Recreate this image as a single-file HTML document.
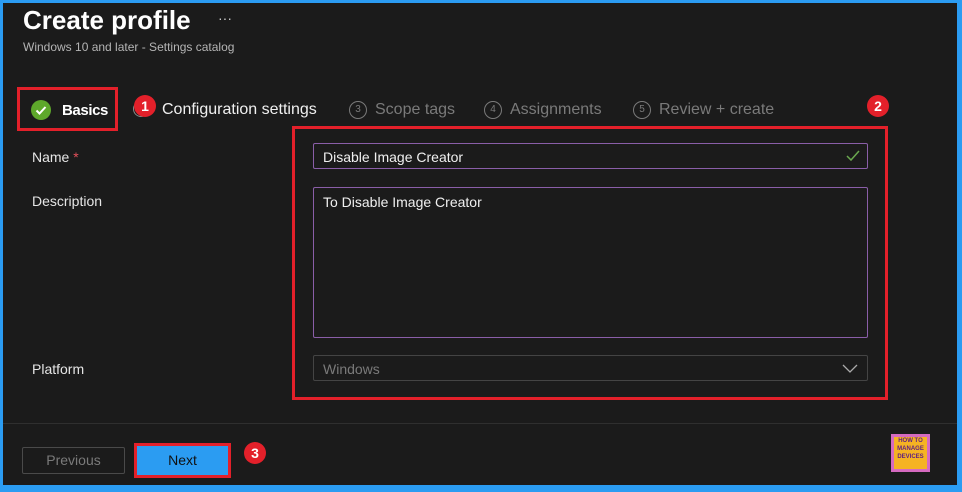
<!DOCTYPE html>
<html><head><meta charset="utf-8"><style>
*{box-sizing:border-box;margin:0;padding:0}
body{width:962px;height:492px;background:#2b9cf2;position:relative;overflow:hidden;font-family:"Liberation Sans",sans-serif;color:#fff}
.main{position:absolute;left:3px;top:3px;width:954px;height:482px;background:#1b1b1b}
.a{position:absolute}
.sep{position:absolute;left:3px;top:423px;width:954px;height:1px;background:#2f2f2f}
.red{position:absolute;border:3px solid #e3202a}
.badge{position:absolute;width:22px;height:22px;border-radius:50%;background:#e3202a;color:#fff;font-size:14px;font-weight:bold;text-align:center;line-height:22px}
.step{position:absolute;font-size:16px;color:#7a7a7a;top:101px}
.num{display:inline-block;width:18px;height:18px;border:1.5px solid #7a7a7a;border-radius:50%;font-size:10px;text-align:center;line-height:15px;vertical-align:2px;margin-right:8px}
.lbl{position:absolute;left:32px;font-size:14px;color:#e6e6e6}
.inp{position:absolute;left:313px;width:555px;border:1px solid #8a5ea8;border-radius:2px;font-size:14px;padding:6px 9px;color:#f0f0f0}
</style></head><body>
<div class="main"></div>
<div class="a" style="left:23px;top:5px;font-size:26px;font-weight:bold">Create profile</div>
<div class="a" style="left:218px;top:10px;font-size:14px;color:#ccc">···</div>
<div class="a" style="left:23px;top:40px;font-size:12px;color:#b5b5b5">Windows 10 and later - Settings catalog</div>
<div class="red" style="left:17px;top:87px;width:101px;height:44px"></div>
<div class="a" style="left:31px;top:100px;width:20px;height:20px;border-radius:50%;background:#5ea82b"><svg width="20" height="20"><path d="M5.5 10.5l3 3 6-6.5" stroke="#fff" stroke-width="2" fill="none"/></svg></div>
<div class="a" style="left:62px;top:102px;font-size:15px;font-weight:bold;letter-spacing:-0.4px">Basics</div>
<div class="a" style="left:133px;top:101px;width:16px;height:16px;border-radius:50%;border:1.5px solid #888"></div>
<div class="badge" style="left:134px;top:95px">1</div>
<div class="a" style="left:162px;top:101px;font-size:16px;color:#f0f0f0">Configuration settings</div>
<div class="step" style="left:349px"><span class="num">3</span>Scope tags</div>
<div class="step" style="left:484px"><span class="num">4</span>Assignments</div>
<div class="step" style="left:633px"><span class="num">5</span>Review + create</div>
<div class="badge" style="left:867px;top:95px">2</div>
<div class="red" style="left:292px;top:126px;width:596px;height:274px"></div>
<div class="lbl" style="top:149px">Name <span style="color:#e3505a">*</span></div>
<div class="inp" style="top:143px;height:26px;padding-top:5px">Disable Image Creator<svg class="a" style="right:7px;top:6px" width="14" height="12"><path d="M1 6l4 4 8-9" stroke="#6aa84f" stroke-width="1.5" fill="none"/></svg></div>
<div class="lbl" style="top:193px">Description</div>
<div class="inp" style="top:187px;height:151px">To Disable Image Creator</div>
<div class="lbl" style="top:361px">Platform</div>
<div class="inp" style="top:355px;height:26px;padding-top:5px;border-color:#444;color:#7a7a7a">Windows<svg class="a" style="right:9px;top:8px" width="16" height="10"><path d="M1 1l7 7 7-7" stroke="#aaa" stroke-width="1.3" fill="none"/></svg></div>
<div class="sep"></div>
<div class="a" style="left:22px;top:447px;width:103px;height:27px;border:1px solid #4a4a4a;border-radius:2px;color:#7a7a7a;font-size:14px;text-align:center;line-height:25px">Previous</div>
<div class="red" style="left:134px;top:443px;width:97px;height:35px;background:#2b9cf2;color:#111;font-size:14px;text-align:center;line-height:29px">Next</div>
<div class="badge" style="left:244px;top:442px">3</div>
<div class="a" style="left:891px;top:434px;width:39px;height:38px;background:#d56ac0;padding:3px"><div style="background:#f5b323;height:100%;font-size:6px;color:#602080;text-align:center;line-height:8px;font-weight:bold">HOW TO<br>MANAGE<br>DEVICES</div></div>
</body></html>
